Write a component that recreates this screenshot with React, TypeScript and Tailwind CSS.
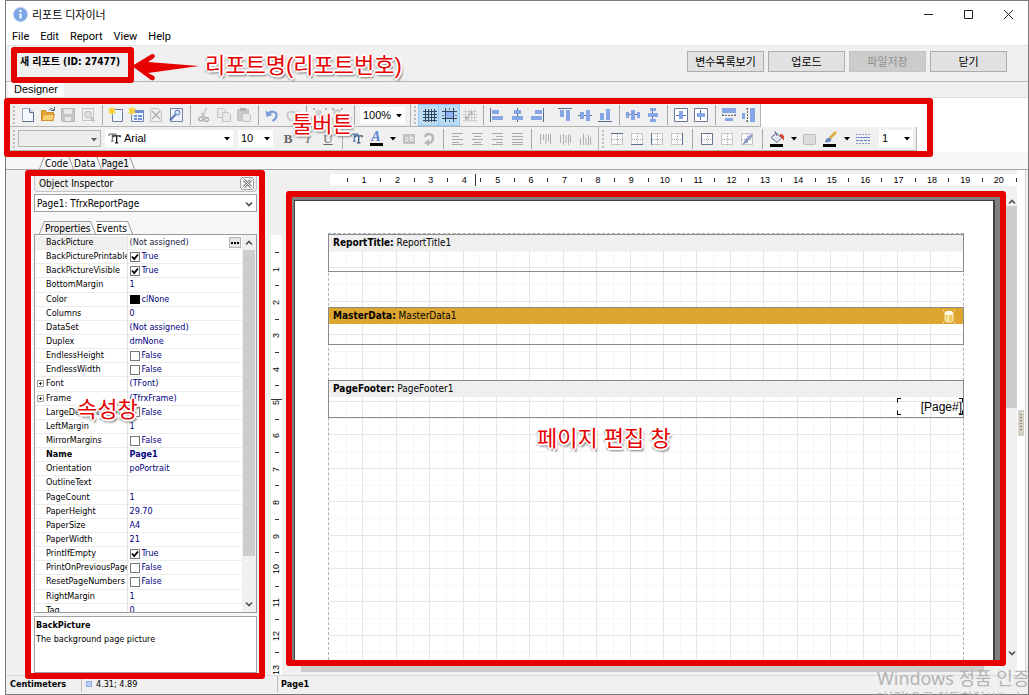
import React from "react";

type Kids = { children?: React.ReactNode };

/* ---------- annotation pieces ---------- */

function Frame() {
  return <div className="pointer-events-none absolute -inset-[6px] z-20 rounded-[3px] border-[6px] border-[#e60000]" />;
}

function Note({ children, className }: Kids & { className: string }) {
  return (
    <div
      className={`pointer-events-none absolute z-30 whitespace-nowrap font-['Liberation_Sans','Noto_Sans_CJK_KR',sans-serif] text-[22px] leading-[26px] text-[#e60000] [text-shadow:1px_0_0_#fff,-1px_0_0_#fff,0_1px_0_#fff,0_-1px_0_#fff,2px_0_0_#fff,-2px_0_0_#fff,0_2px_0_#fff,0_-2px_0_#fff,1px_1px_0_#fff,-1px_-1px_0_#fff,2px_3px_2px_#777,-2px_2px_2px_#aaa] ${className}`}
    >
      {children}
    </div>
  );
}

/* ---------- toolbar icons, all on a 16 x 16 board ---------- */

const BLUE = "#86a6e6";
const DARK = "#5a6c90";
const OFF = "#c2c2c2";

function bars(xs: number[][], fill: string) {
  return xs.map(([x, y, w, h], i) => <rect key={i} x={x} y={y} width={w} height={h} fill={fill} />);
}

function dotted(strong: React.ReactNode) {
  return (
    <>
      <rect x="2.5" y="2.5" width="11" height="11" fill="#fafafa" stroke="#9a9a9a" strokeDasharray="1 1" />
      <path d="M8.5 3v11M3 8.5h11" stroke="#a8a8a8" strokeDasharray="1 1" fill="none" />
      {strong}
    </>
  );
}

const hash = (c: string) => <path d="M4.5 2v13M7.5 2v13M10.500 2v13M13.500 2v13M2 4.500h14M2 7.500h14M2 10.500h14M2 13.500h14" stroke={c} fill="none" />;
const star = <path d="M4 -1l1 2.700L8 1 6.500 4 8 6.500 5 6 4 9 3 6 0 6.500 1.500 4 0 1l3 .700z" fill="#f5cf3c" />;

const ICONS: Record<string, React.ReactNode> = {
  newDoc: (
    <>
      <path d="M2.500 1.500h7l4 4v9h-11z" fill="#f4f8ff" stroke="#9aa5bd" />
      <path d="M9.500 1.500v4h4" fill="#c9d8f3" stroke="#5b6d95" />
      <path d="M2.500 14.500h11v-9" fill="none" stroke="#5b6d95" />
    </>
  ),
  open: (
    <>
      <path d="M1.500 13.500v-10h4l1 2h7v8z" fill="#e9a93a" stroke="#c98a25" />
      <path d="M1.500 13.500l2-6h11l-1.500 6z" fill="#f9cd72" stroke="#d3952e" />
      <path d="M9 3.500c1-2 3-2.500 4.500-1M14.500 0v3.500H11" fill="none" stroke="#4f6286" />
    </>
  ),
  save: (
    <>
      <path d="M1.500 1.500h13v13h-12l-1-1z" fill="#c6c6c6" stroke="#b4b4b4" />
      <path d="M4 2h8v5H4zM5 10h6v4H5z" fill="#e9e9e9" />
    </>
  ),
  preview: (
    <>
      <path d="M2.500 1.500h11v12h-11z" fill="#eee" stroke={OFF} />
      <circle cx="8" cy="7.500" r="3.500" fill="#ddd" stroke={OFF} />
      <path d="M10.500 10l4 4.500" stroke={OFF} strokeWidth="2" />
    </>
  ),
  newPage: (
    <>
      <path d="M4.500 2.500h10v12h-10z" fill="#edf3ff" stroke="#6e7c9c" />
      {star}
    </>
  ),
  newDialog: (
    <>
      <path d="M3.500 3.500h12v11h-12z" fill="#edf3ff" stroke="#7085b0" />
      <path d="M4 4h11v2H4zM6 8h3v2H6zM10 8h4v2h-4zM6 11h3v2H6zM10 11h4v2h-4z" fill="#6d92dc" />
      {star}
    </>
  ),
  del: (
    <>
      <path d="M2.500 1.500h8l3 3v10h-11z" fill="#eee" stroke={OFF} />
      <path d="M4 4l8 8M12 4l-8 8" stroke="#b0b0b0" strokeWidth="1.500" />
    </>
  ),
  config: (
    <>
      <path d="M2.500 1.500h12v13h-12z" fill="#eef2fb" stroke="#76839f" />
      <circle cx="9.500" cy="5.500" r="2.500" fill="#cfe0fb" stroke="#5d78b4" />
      <path d="M7.500 7.500L2 13.500" stroke="#5d78b4" strokeWidth="2" />
    </>
  ),
  cut: (
    <>
      <path d="M10.500 1L6 10M5.500 6l4.500 5" stroke={OFF} strokeWidth="1.500" fill="none" />
      <circle cx="5" cy="12" r="2" fill="none" stroke="#b0b0b0" strokeWidth="1.500" />
      <circle cx="10.500" cy="12.500" r="2" fill="none" stroke="#b0b0b0" strokeWidth="1.500" />
    </>
  ),
  copy: (
    <>
      <path d="M1.500 1.500h6l2 2v7h-8z" fill="#e9e9e9" stroke={OFF} />
      <path d="M6.500 5.500h6l2 2v7h-8z" fill="#e9e9e9" stroke={OFF} />
    </>
  ),
  paste: (
    <>
      <path d="M1.500 2.500h11v11h-11z" fill="#c9c9c9" stroke={OFF} />
      <path d="M4 1h6v3H4z" fill="#b0b0b0" />
      <path d="M6.500 6.500h6l2 2v6h-8z" fill="#e9e9e9" stroke={OFF} />
    </>
  ),
  undo: (
    <>
      <path d="M4 8c2-5 9-4 8.500 1-.3 2.500-2 4-4 5" fill="none" stroke="#7c9bd9" strokeWidth="2.200" />
      <path d="M1.500 3.500L2.500 10l6-2z" fill="#7c9bd9" />
    </>
  ),
  redo: (
    <>
      <path d="M12 8c-2-5-9-4-8.500 1 .3 2.500 2 4 4 5" fill="none" stroke="#cbcbcb" strokeWidth="2.200" />
      <path d="M14.500 3.500L13.500 10l-6-2z" fill="#cbcbcb" />
    </>
  ),
  group: (
    <>
      <path d="M4 4h5v5H4zM8 8h5v5H8z" fill="#d2d2d2" stroke={OFF} />
      {bars([[1, 1, 2, 2], [13, 1, 2, 2], [1, 13, 2, 2], [13, 13, 2, 2]], "#b5b5b5")}
    </>
  ),
  ungroup: (
    <>
      <path d="M2 3h6v5H2zM8 9h6v5H8z" fill="#d2d2d2" stroke={OFF} />
      {bars([[0, 1, 2, 2], [9, 1, 2, 2], [6, 13, 2, 2], [13, 7, 2, 2]], "#b5b5b5")}
    </>
  ),
  grid: hash("#33475f"),
  snap: (
    <>
      <path d="M5 5h7v6H5z" fill="#8db4f0" />
      <path d="M4.500 1v14M12.500 1v14M1 4.500h15M1 11.500h15" stroke="#33475f" fill="none" />
      {bars([[8, 1, 1, 2], [8, 13, 1, 2], [1, 8, 2, 1], [14, 8, 2, 1]], "#5b77a5")}
    </>
  ),
  fit: (
    <>
      {hash("#cfcfcf")}
      <path d="M5 12l6-7M5 12v-3M5 12h3M11 5v3M11 5H8" stroke="#a5a5a5" fill="none" />
    </>
  ),
  alL: <>{bars([[1, 1, 1, 14]], DARK)}{bars([[3, 3, 7, 4], [3, 9, 11, 4]], BLUE)}</>,
  alC: <>{bars([[8, 1, 1, 14]], DARK)}{bars([[5, 3, 7, 4], [3, 9, 11, 4]], BLUE)}</>,
  alR: <>{bars([[14, 1, 1, 14]], DARK)}{bars([[6, 3, 7, 4], [2, 9, 11, 4]], BLUE)}</>,
  alT: <>{bars([[1, 1, 14, 1]], DARK)}{bars([[3, 3, 4, 7], [9, 3, 4, 11]], BLUE)}</>,
  alM: <>{bars([[1, 8, 14, 1]], DARK)}{bars([[3, 5, 4, 7], [9, 3, 4, 11]], BLUE)}</>,
  alB: <>{bars([[1, 14, 14, 1]], DARK)}{bars([[3, 6, 4, 7], [9, 2, 4, 11]], BLUE)}</>,
  spH: <>{bars([[1, 7, 14, 1]], DARK)}{bars([[1, 5, 3, 6], [6, 3, 4, 10], [12, 5, 3, 6]], BLUE)}</>,
  spV: <>{bars([[7, 1, 1, 14]], DARK)}{bars([[5, 1, 6, 3], [3, 6, 10, 4], [5, 12, 6, 3]], BLUE)}</>,
  ceH: (
    <>
      <path d="M1.500 1.500h13v13h-13z" fill="#fff" stroke="#6a7893" />
      {bars([[3, 8, 10, 1]], DARK)}
      {bars([[6, 4, 4, 8]], BLUE)}
    </>
  ),
  ceV: (
    <>
      <path d="M1.500 1.500h13v13h-13z" fill="#fff" stroke="#6a7893" />
      {bars([[7, 3, 1, 10]], DARK)}
      {bars([[4, 6, 8, 4]], BLUE)}
    </>
  ),
  saW: (
    <>
      {bars([[1, 1, 14, 5], [4, 11, 8, 3]], BLUE)}
      <path d="M1 8.500h14M2 7v3M14 7v3" stroke="#666" strokeDasharray="2 1" fill="none" />
    </>
  ),
  saH: (
    <>
      {bars([[9, 1, 5, 14], [1, 6, 3, 6]], BLUE)}
      <path d="M6.500 1v14M5 2h3M5 14h3" stroke="#666" strokeDasharray="2 1" fill="none" />
    </>
  ),
  label: (
    <>
      <rect x="2" y="3" width="12" height="10" fill="#c2c2c2" />
      <path d="M4 9.500h3v-3H4.500M9.500 4.500v5h2.500v-3H9.500" stroke="#f4f4f4" fill="none" />
    </>
  ),
  rotate: (
    <>
      <path d="M4 6c1-4 8-4 8 1 0 4-3 5-6 5" fill="none" stroke="#b8b8b8" strokeWidth="2.500" />
      <path d="M8 8v7L3 12z" fill="#b8b8b8" />
    </>
  ),
  txL: <path d="M3 2.500h11M3 5.500h7M3 8.500h11M3 11.500h7M3 13.500h11" stroke="#ababab" />,
  txC: <path d="M3 2.500h11M5 5.500h7M3 8.500h11M5 11.500h7M3 13.500h11" stroke="#ababab" />,
  txR: <path d="M3 2.500h11M7 5.500h7M3 8.500h11M7 11.500h7M3 13.500h11" stroke="#ababab" />,
  txJ: <path d="M3 2.500h11M3 5.500h11M3 8.500h11M3 11.500h11M3 13.500h11" stroke="#ababab" />,
  vT: <path d="M3.500 3v10M6.500 3v6M9 3v10M11.500 3v7M13.500 3v10" stroke="#b0b0b0" />,
  vM: <path d="M3.500 4v8M6.500 3v11M9 4v8M11.500 3v11M13.500 4v8" stroke="#b0b0b0" />,
  vB: <path d="M3.500 7v7M6.500 3v11M9 7v7M11.500 4v10M13.500 6v8" stroke="#b0b0b0" />,
  frT: dotted(<path d="M2 2.500h12" stroke={DARK} />),
  frB: dotted(<path d="M2 13.500h12" stroke={DARK} />),
  frL: dotted(<path d="M2.500 2v12" stroke={DARK} />),
  frR: dotted(<path d="M13.500 2v12" stroke={DARK} />),
  frA: dotted(<path d="M2.500 2.500h11v11h-11z" stroke="#6a7893" fill="none" />),
  frN: dotted(null),
  frE: dotted(
    <>
      <path d="M13 4L7 10" stroke="#8ea3cb" strokeWidth="3" />
      <path d="M7 8l2 3-6 3z" fill="#7f93bd" />
    </>,
  ),
  bucket: (
    <>
      <path d="M2 6.500L7.500 2l5 5L8 11.500z" fill="#dfe6f1" stroke="#5c6b86" />
      <path d="M6 0l2 5" stroke="#5c6b86" />
      <path d="M11 3c4 0 5 3 3.500 7-1-3-2-4-3.500-4z" fill="#d6402f" />
      <rect x="1" y="13" width="13" height="3" fill="#000" />
    </>
  ),
  fillOff: <rect x="1.500" y="3.500" width="12" height="10" rx="1" fill="#dcdcdc" stroke="#bbb" />,
  brush: (
    <>
      <path d="M14 1L8 7" stroke="#e0a83a" strokeWidth="2.500" />
      <path d="M3 11c0-3 3-5 5-4l1.500 1.500C9 11 6 12 3 11z" fill="#7088b8" />
      <rect x="1" y="13" width="13" height="3" fill="#000" />
    </>
  ),
  lines: (
    <>
      <path d="M1 3.500h14M1 12.500h14" stroke="#8a9abb" strokeDasharray="2 1" />
      <path d="M1 9.500h14" stroke="#6079ad" strokeDasharray="3 1" />
      <path d="M1 6.500h14" stroke="#6d8cd0" />
    </>
  ),
};

const TITLES: Record<string, string> = { newDoc: "New", open: "Open", save: "Save", undo: "Undo", redo: "Redo", cut: "Cut", copy: "Copy", paste: "Paste" };

function Tool({ name, on }: { name: string; on?: boolean }) {
  return (
    <button
      type="button"
      aria-label={TITLES[name] ?? name}
      className={`flex h-5 w-5 shrink-0 items-center justify-center ${on ? "bg-[#bcdcf4] outline outline-[#90c8f6]" : ""}`}
    >
      <svg width="16" height="16" viewBox="0 0 16 16">{ICONS[name]}</svg>
    </button>
  );
}

function Tools({ names }: { names: string[] }) {
  return <>{names.map((n) => <Tool key={n} name={n} />)}</>;
}

function Sep({ wide }: { wide?: boolean }) {
  return (
    <div className={`flex h-5 shrink-0 justify-center ${wide ? "w-[10px]" : "w-2"}`}>
      <div className="h-5 w-px bg-[#a9a9a9]" />
    </div>
  );
}

function Grip() {
  return <div className="mx-[3px] h-[18px] w-[2px] shrink-0 bg-[repeating-linear-gradient(to_bottom,#bcbcbc_0_2px,transparent_2px_4px)]" />;
}

function Caret() {
  return (
    <svg width="6" height="4" viewBox="0 0 6 4" className="shrink-0">
      <path d="M0 0h6L3 3.500z" fill="#000" />
    </svg>
  );
}

function DropArrow({ label }: { label: string }) {
  return (
    <button type="button" aria-label={label} className="flex h-5 w-[13px] shrink-0 items-center justify-center">
      <Caret />
    </button>
  );
}

function Combo({ label, value, box, caret, icon }: { label: string; value: string; box: string; caret?: string; icon?: React.ReactNode }) {
  return (
    <label className={`relative flex h-[17px] shrink-0 items-center ${box}`}>
      {icon}
      <select aria-label={label} className="min-w-0 flex-1 appearance-none bg-transparent pl-[3px] font-['Liberation_Sans',sans-serif] text-[11px] leading-[15px] outline-none" defaultValue={value}>
        <option value={value}>{value}</option>
      </select>
      <span className={`pointer-events-none absolute right-[3px] top-[7px] ${caret ?? ""}`}>
        <Caret />
      </span>
    </label>
  );
}

function Letter({ label, children, className }: Kids & { label: string; className: string }) {
  return (
    <button type="button" aria-label={label} className={`h-5 w-5 shrink-0 text-center font-['Liberation_Serif',serif] text-[13px] leading-5 text-[#666] ${className}`}>
      {children}
    </button>
  );
}

function DoubleT({ blue }: { blue?: boolean }) {
  return (
    <svg width="13" height="13" viewBox="0 0 15 14" aria-hidden="true" className="shrink-0">
      <path d="M1 2h8v2M1 4V2M5 2v8M3.500 10h3" fill="none" stroke={blue ? "#4a78a8" : "#777"} strokeWidth="1.400" />
      <path d="M6 5.500V4h8v1.500M10 4v8M8 12h4" fill="none" stroke={blue ? "#3a5a80" : "#222"} strokeWidth="1.600" />
    </svg>
  );
}

function Toolbars() {
  return (
    <div className="relative ml-1 flex w-fit flex-col pr-[10px]">
      <Frame />
      <Note className="left-[282px] top-[8px]">툴버튼</Note>
      <div className="flex">
        <div className="flex h-[23px] w-[401px] items-center border-b border-r border-[#b5b5b5] bg-[#f0f0f0]">
          <Grip />
          <Tools names={["newDoc", "open", "save", "preview"]} />
          <Sep />
          <Tools names={["newPage", "newDialog", "del", "config"]} />
          <Sep />
          <Tools names={["cut", "copy", "paste"]} />
          <Sep />
          <Tools names={["undo", "redo"]} />
          <Sep />
          <Tools names={["group", "ungroup"]} />
          <Sep />
          <Combo label="Zoom" value="100%" box="ml-[2px] w-[45px] bg-white" />
        </div>
        <div className="flex h-[23px] items-center border-b border-r border-[#b5b5b5] bg-[#f0f0f0] pr-px">
          <Grip />
          <Tool name="grid" on />
          <Tool name="snap" on />
          <Tool name="fit" />
          <Sep />
          <Tools names={["alL", "alC", "alR"]} />
          <div className="w-[8px]" />
          <Tools names={["alT", "alM", "alB"]} />
          <Sep />
          <Tools names={["spH", "spV"]} />
          <Sep />
          <Tools names={["ceH", "ceV"]} />
          <Sep />
          <Tools names={["saW", "saH"]} />
        </div>
      </div>
      <div className="flex">
        <div className="flex h-[24px] w-[589px] items-center border-b border-r border-[#b5b5b5] bg-[#f0f0f0]">
          <Grip />
          <Combo label="Style" value="" box="w-[83px] border border-[#b5b5b5] bg-[#ededed]" caret="opacity-60" />
          <Combo label="Font" value="Arial" box="ml-[4px] w-[128px] bg-white pl-[3px]" icon={<DoubleT />} />
          <Combo label="Font size" value="10" box="ml-[5px] w-[35px] bg-white" />
          <div className="w-[5px]" />
          <Letter label="Bold" className="font-bold">B</Letter>
          <Letter label="Italic" className="italic">I</Letter>
          <Letter label="Underline" className="underline">U</Letter>
          <Sep />
          <button type="button" aria-label="Font settings" className="flex h-5 w-5 items-center justify-center">
            <DoubleT blue />
          </button>
          <button type="button" aria-label="Font color" className="flex h-5 w-5 flex-col items-center justify-center">
            <span className="font-['Liberation_Serif',serif] text-[14px] font-bold italic leading-[12px] text-[#5b86d6]">A</span>
            <span className="h-[3px] w-[13px] bg-black" />
          </button>
          <DropArrow label="Font color list" />
          <Tools names={["label", "rotate"]} />
          <Sep />
          <Tools names={["txL", "txC", "txR", "txJ"]} />
          <Sep />
          <Tools names={["vT", "vM", "vB"]} />
        </div>
        <div className="flex h-[24px] items-center border-b border-r border-[#b5b5b5] bg-[#f0f0f0] pr-[3px]">
          <Grip />
          <Tools names={["frT", "frB", "frL", "frR"]} />
          <Sep wide />
          <Tools names={["frA", "frN", "frE"]} />
          <Sep wide />
          <Tool name="bucket" />
          <DropArrow label="Fill color list" />
          <Tools names={["fillOff", "brush"]} />
          <DropArrow label="Line color list" />
          <Tool name="lines" />
          <Combo label="Frame width" value="1" box="ml-[6px] w-[34px] bg-white" />
        </div>
      </div>
    </div>
  );
}

/* ---------- object inspector ---------- */

type Prop = { name: string; value: string; kind?: "check" | "color"; on?: boolean; plus?: boolean; bold?: boolean };

const PROPS: Prop[] = [
  { name: "BackPicture", value: "(Not assigned)" },
  { name: "BackPicturePrintable", value: "True", kind: "check", on: true },
  { name: "BackPictureVisible", value: "True", kind: "check", on: true },
  { name: "BottomMargin", value: "1" },
  { name: "Color", value: "clNone", kind: "color" },
  { name: "Columns", value: "0" },
  { name: "DataSet", value: "(Not assigned)" },
  { name: "Duplex", value: "dmNone" },
  { name: "EndlessHeight", value: "False", kind: "check" },
  { name: "EndlessWidth", value: "False", kind: "check" },
  { name: "Font", value: "(TFont)", plus: true },
  { name: "Frame", value: "(TfrxFrame)", plus: true },
  { name: "LargeDesignHeight", value: "False", kind: "check" },
  { name: "LeftMargin", value: "1" },
  { name: "MirrorMargins", value: "False", kind: "check" },
  { name: "Name", value: "Page1", bold: true },
  { name: "Orientation", value: "poPortrait" },
  { name: "OutlineText", value: "" },
  { name: "PageCount", value: "1" },
  { name: "PaperHeight", value: "29.70" },
  { name: "PaperSize", value: "A4" },
  { name: "PaperWidth", value: "21" },
  { name: "PrintIfEmpty", value: "True", kind: "check", on: true },
  { name: "PrintOnPreviousPage", value: "False", kind: "check" },
  { name: "ResetPageNumbers", value: "False", kind: "check" },
  { name: "RightMargin", value: "1" },
  { name: "Tag", value: "0" },
];

function CheckBox({ on, label }: { on?: boolean; label: string }) {
  return (
    <span className="relative flex h-[10px] w-[10px] shrink-0">
      <input type="checkbox" defaultChecked={on} aria-label={label} className="peer h-[10px] w-[10px] appearance-none border border-[#777] bg-white" />
      <svg viewBox="0 0 10 10" className="pointer-events-none absolute inset-0 hidden h-[10px] w-[10px] peer-checked:block">
        <path d="M2 4.500l2.200 2.500L8 2.500" fill="none" stroke="#000" strokeWidth="1.800" />
      </svg>
    </span>
  );
}

function Chevron({ up, className }: { up?: boolean; className?: string }) {
  return (
    <svg width="8" height="6" viewBox="0 0 8 6" className={`shrink-0 ${className ?? ""}`}>
      <path d={up ? "M1 4.500l3-3 3 3" : "M1 1.500l3 3 3-3"} fill="none" stroke="#505050" strokeWidth="1.600" />
    </svg>
  );
}

function Slant({ back }: { back?: boolean }) {
  return (
    <svg width="6" height="13" viewBox="0 0 6 13" className="shrink-0">
      <path d={back ? "M.5 0l5 13" : "M5.500 0l-5 13"} stroke="#999" fill="none" />
    </svg>
  );
}

function Tabs({ names, lit }: { names: string[]; lit: string }) {
  return (
    <div role="tablist" className="flex h-[13px] items-end text-[10px]">
      <Slant />
      {names.map((n) => (
        <React.Fragment key={n}>
          <button
            type="button"
            role="tab"
            aria-selected={n === lit}
            className={`h-[13px] border-t border-[#999] leading-[13px] ${n === lit ? "bg-[#f0f0f0]" : "bg-white"}`}
          >
            {n}
          </button>
          <Slant back />
        </React.Fragment>
      ))}
    </div>
  );
}

function Inspector() {
  return (
    <section className="relative mb-[2px] mt-[6px] flex w-[228px] shrink-0 flex-col bg-[#f7f7f7] pl-[3px] pr-[2px]">
      <Frame />
      <Note className="left-[46px] top-[221px]">속성창</Note>
      <header className="flex h-[16px] shrink-0 items-center justify-between rounded-b-[4px] border-b border-l border-r border-[#c3c3c3] bg-[#f0f0f0] pl-[4px] pr-[2px]">
        <h2 className="text-[10px] leading-[13px]">Object Inspector</h2>
        <button type="button" aria-label="Close inspector" className="flex h-[13px] w-[14px] items-center justify-center rounded-[3px] border border-[#a5a5a5] bg-[#f4f4f4]">
          <svg width="9" height="9" viewBox="0 0 9 9">
            <path d="M1 1l7 7M8 1L1 8" stroke="#777" strokeWidth="2.600" />
            <path d="M1 1l7 7M8 1L1 8" stroke="#fff" strokeWidth="1" />
          </svg>
        </button>
      </header>
      <label className="relative mt-[2px] block shrink-0">
        <select aria-label="Object" className="block h-[18px] w-full appearance-none border border-[#a0a0a0] bg-white pl-[2px] text-[10px] leading-[15px] outline-none" defaultValue="p">
          <option value="p">Page1: TfrxReportPage</option>
        </select>
        <Chevron className="pointer-events-none absolute right-[4px] top-[7px]" />
      </label>
      <div className="mt-[9px] shrink-0 pl-[5px]">
        <Tabs names={["Properties", "Events"]} lit="Properties" />
      </div>
      <div className="flex min-h-0 flex-1 overflow-hidden border border-[#9b9b9b] bg-white">
        <div className="min-w-0 flex-1 overflow-hidden pt-px">
          <table className="h-[382px] w-full table-fixed border-collapse">
            <colgroup>
              <col className="w-[92px]" />
              <col />
            </colgroup>
            <tbody>
              {PROPS.map((p, i) => (
                <tr key={p.name} className={`border-b border-[#ececec] ${p.bold ? "font-bold" : ""}`}>
                  <th scope="row" className={`overflow-hidden whitespace-nowrap border-r border-[#e3e3e3] p-0 text-left leading-[13px] ${p.bold ? "font-bold" : "font-normal"} ${i === 0 ? "bg-[#f0f0f0]" : ""}`}>
                    <span className="flex items-center">
                      <span className="flex w-[11px] shrink-0 justify-center">
                        {p.plus && (
                          <svg width="7" height="7" viewBox="0 0 7 7">
                            <path d="M.5.500h6v6h-6z" fill="#fff" stroke="#999" />
                            <path d="M2 3.500h3M3.500 2v3" stroke="#333" />
                          </svg>
                        )}
                      </span>
                      {p.name}
                    </span>
                  </th>
                  <td className={`p-0 leading-[13px] ${i === 0 ? "text-[#1c1c3c]" : "text-[#000080]"}`}>
                    <span className="flex items-center pl-[2px]">
                      {p.kind === "check" && <CheckBox on={p.on} label={p.name} />}
                      {p.kind === "color" && <span className="h-[9px] w-[10px] shrink-0 bg-black" />}
                      <span className={p.kind ? "pl-[2px]" : ""}>{p.value}</span>
                      {i === 0 && (
                        <button type="button" aria-label="Edit BackPicture" className="ml-auto mr-px flex h-[11px] w-[12px] items-center justify-center gap-px border border-[#b5b5b5] bg-[#e4e4e4]">
                          <i className="h-[2px] w-[2px] bg-black" />
                          <i className="h-[2px] w-[2px] bg-black" />
                          <i className="h-[2px] w-[2px] bg-black" />
                        </button>
                      )}
                    </span>
                  </td>
                </tr>
              ))}
            </tbody>
          </table>
        </div>
        <div className="flex w-[14px] shrink-0 flex-col items-center bg-[#f0f0f0]">
          <div className="flex h-[15px] items-center"><Chevron up /></div>
          <div className="w-[12px] flex-[306] bg-[#cdcdcd]" />
          <div className="flex-[39]" />
          <div className="flex h-[17px] items-center"><Chevron /></div>
        </div>
      </div>
      <div className="mt-[3px] h-[57px] shrink-0 border border-[#a0a0a0] bg-white pl-px pt-px leading-[14px]">
        <p className="font-bold">BackPicture</p>
        <p>The background page picture</p>
      </div>
    </section>
  );
}

/* ---------- rulers and page ---------- */

function HRuler() {
  return (
    <div className="relative ml-[48px] mt-1 flex h-3 shrink-0 items-center bg-white pl-[9px] font-['Liberation_Sans',sans-serif] text-[9px] leading-3">
      {Array.from({ length: 40 }, (_, i) => (
        <div key={i} className="flex w-0 flex-1 justify-center overflow-visible">
          {i % 2 ? <span>{(i + 1) / 2}</span> : <span className="h-[4px] w-px bg-[#333]" />}
        </div>
      ))}
      <div className="flex w-[10px] justify-end"><span className="h-[4px] w-px bg-[#333]" /></div>
      <div className="absolute left-[145px] top-0 h-3 w-px bg-[#333]" />
    </div>
  );
}

function VRuler() {
  return (
    <div className="ml-[12px] flex w-[11px] shrink-0 flex-col overflow-hidden pt-[65px]">
      <div className="relative min-h-0 flex-1 bg-white pt-[9px] font-['Liberation_Sans',sans-serif] text-[9px] leading-[11px]">
        <div className="absolute left-0 top-[164px] h-px w-[11px] bg-[#333]" />
        <div className="flex h-[434px] flex-col">
          {Array.from({ length: 26 }, (_, i) => (
            <div key={i} className="flex h-0 flex-1 items-center justify-center">
              {i % 2 ? <span className="rotate-180 [writing-mode:vertical-rl]">{(i + 1) / 2}</span> : <span className="h-px w-[4px] bg-[#333]" />}
            </div>
          ))}
        </div>
      </div>
    </div>
  );
}

function GridLines() {
  const step = 16.7;
  const at = (i: number) => Math.round(i * step) + 0.5;
  const idx = Array.from({ length: 120 }, (_, i) => i + 1);
  const ordered = [...idx.filter((i) => i % 2), ...idx.filter((i) => i % 2 === 0)];
  return (
    <svg className="absolute inset-0 h-full w-full" aria-hidden="true">
      {ordered.map((i) => (
        <g key={i} stroke={i % 2 ? "#f6f6f6" : "#e6e6e6"}>
          <line x1={at(i)} x2={at(i)} y1="0" y2="100%" />
          <line y1={at(i)} y2={at(i)} x1="0" x2="100%" />
        </g>
      ))}
    </svg>
  );
}

function Band({ kind, name, gold, children }: Kids & { kind: string; name: string; gold?: boolean }) {
  return (
    <div className="relative h-[38px] border border-[#8a8a8a]">
      <div className={`flex h-[16px] items-center justify-between pl-[4px] pr-[8px] text-[10px] leading-[14px] ${gold ? "bg-[#dea62f]" : "bg-[#efefef]"}`}>
        <span><b>{kind}:</b> {name}</span>
        {gold && (
          <svg width="12" height="13" viewBox="0 0 12 13">
            <path d="M2 3v7.500c0 2 8 2 8 0V3z" fill="#f0c95e" stroke="#fff6d8" />
            <ellipse cx="6" cy="3" rx="4" ry="1.700" fill="#fffbe8" stroke="#fff" />
            <path d="M5 5.500v6" stroke="#fff3c4" strokeWidth="1.500" />
            <path d="M0 .500h1M11 .500h1M0 12.500h1M11 12.500h1" stroke="#fff" />
          </svg>
        )}
      </div>
      {children}
    </div>
  );
}

function PageCanvas() {
  return (
    <div className="relative ml-[10px] flex min-w-0 flex-1 bg-[#808080] pl-[2px] pr-[5px] pt-[3px]">
      <Frame />
      <Note className="left-[245px] top-[229px]">페이지 편집 창</Note>
      <div className="flex flex-1 flex-col border-l border-r-2 border-t border-[#404040] bg-white pl-[33px] pr-[29px] pt-[32px]">
        <div className="relative flex-1 border-l border-r border-t border-dashed border-[#b0b0b0]">
          <GridLines />
          <div className="relative -mx-px flex flex-col gap-[35px]">
            <Band kind="ReportTitle" name="ReportTitle1" />
            <Band kind="MasterData" name="MasterData1" gold />
            <Band kind="PageFooter" name="PageFooter1">
              <div className="absolute right-0 top-[17px] flex h-[17px] w-[66px] items-center justify-end pr-px font-['Liberation_Sans',sans-serif] text-[12px] leading-4">
                <svg className="absolute inset-0 h-[17px] w-[66px]" viewBox="0 0 66 17" aria-hidden="true">
                  <path d="M4 .500H.5v4M62 .500h3.500v4M4 16.500H.5v-4M62 16.500h3.500v-4" fill="none" stroke="#000" />
                </svg>
                [Page#]
              </div>
            </Band>
          </div>
        </div>
      </div>
    </div>
  );
}

function Editor() {
  return (
    <div className="flex min-w-0 flex-1 flex-col">
      <HRuler />
      <div className="mt-[11px] flex min-h-0 flex-1">
        <PageCanvas />
        <div className="ml-[6px] flex w-[11px] shrink-0 flex-col items-center">
          <div className="flex h-[9px] items-center"><Chevron up /></div>
          <div className="w-full flex-[203] bg-[#cdcdcd]" />
          <div className="flex-[240]" />
          <div className="flex h-[14px] items-center"><Chevron /></div>
        </div>
      </div>
      <div className="mb-[3px] flex h-[12px] shrink-0 pl-[19px] pr-[33px]">
        <div className="flex-1 bg-[#cdcdcd]" />
      </div>
    </div>
  );
}

/* ---------- window ---------- */

function HeaderButton({ children, disabled }: Kids & { disabled?: boolean }) {
  return (
    <button type="button" disabled={disabled} className="h-[21px] w-[77px] border border-[#adadad] bg-[#e1e1e1] font-['Noto_Sans_CJK_KR',sans-serif] text-[11px] leading-[17px] text-black disabled:border-[#c4c4c4] disabled:bg-[#cccccc] disabled:text-[#8f8f8f]">
      {children}
    </button>
  );
}

export default function App() {
  return (
    <div className="h-screen overflow-hidden bg-white pl-[5px] font-['DejaVu_Sans_Condensed','Noto_Sans_CJK_KR',sans-serif] text-[9px] text-black">
      <div className="flex h-full flex-col border border-[#7a7a7a] bg-[#f0f0f0]">
        <div className="flex h-[27px] shrink-0 items-center justify-between bg-white pl-[7px] pr-[14px]">
          <div className="flex items-center gap-[4px]">
            <svg width="15" height="15" viewBox="0 0 15 15">
              <circle cx="7.500" cy="7.500" r="7" fill="#7aa5e6" stroke="#b9cdee" />
              <path d="M7.500 6.500v5" stroke="#fff" strokeWidth="2" />
              <circle cx="7.500" cy="4" r="1.200" fill="#fff" />
            </svg>
            <h1 className="font-['Noto_Sans','Noto_Sans_CJK_KR',sans-serif] text-[11px] leading-4">리포트 디자이너</h1>
          </div>
          <div className="flex items-center gap-[29px]">
            <button type="button" aria-label="Minimize"><svg width="11" height="11" viewBox="0 0 11 11"><path d="M1 5.500h9" stroke="#222" /></svg></button>
            <button type="button" aria-label="Maximize"><svg width="11" height="11" viewBox="0 0 11 11"><path d="M1.500 1.500h8v8h-8z" fill="none" stroke="#222" /></svg></button>
            <button type="button" aria-label="Close"><svg width="11" height="11" viewBox="0 0 11 11"><path d="M1 1l9 9M10 1l-9 9" stroke="#222" /></svg></button>
          </div>
        </div>
        <nav className="flex h-[18px] shrink-0 items-start gap-[11px] border-b border-[#e4e4e4] bg-white pl-[6px] font-['Roboto',sans-serif] text-[11px] leading-[17px]">
          {["File", "Edit", "Report", "View", "Help"].map((m) => (
            <button type="button" key={m}>{m}</button>
          ))}
        </nav>

        <div className="flex h-[36px] shrink-0 items-start justify-between border-b border-[#b9b9b9] pl-[11px] pr-[21px] pt-[5px]">
          <div className="relative mt-px h-[25px] w-[111px] border-t border-[#8a8a8a] pl-[3px] text-[10px] font-bold leading-[17px]">
            새 리포트 (ID: 27477)
            <Frame />
            <svg className="pointer-events-none absolute left-[114px] top-0 z-20 h-[28px] w-[70px]" viewBox="0 0 70 28">
              <path d="M1 13L20 1.500c3-1.500 5 1 3 3.500L17 9l51 4-51 7 6 3c2 2.500 0 5.500-3 4z" fill="#e60000" />
            </svg>
            <Note className="left-[188px] top-0 font-normal">리포트명(리포트번호)</Note>
          </div>
          <div className="flex gap-1">
            <HeaderButton>변수목록보기</HeaderButton>
            <HeaderButton>업로드</HeaderButton>
            <HeaderButton disabled>파일저장</HeaderButton>
            <HeaderButton>닫기</HeaderButton>
          </div>
        </div>

        <div className="flex h-[16px] shrink-0 border-b border-[#dcdcdc] pl-[2px]">
          <button type="button" className="h-[15px] w-[56px] bg-white font-['Liberation_Sans',sans-serif] text-[11px] leading-[15px]">Designer</button>
        </div>

        <div className="h-[54px] shrink-0 bg-white pt-[6px]">
          <Toolbars />
        </div>

        <div className="flex h-[18px] shrink-0 items-end border-b border-[#a8a8a8] bg-[#f7f7f7] pl-[33px]">
          <Tabs names={["Code", "Data", "Page1"]} lit="Page1" />
        </div>

        <main className="flex min-h-0 flex-1">
          <div className="w-[25px] shrink-0" />
          <Inspector />
          <VRuler />
          <Editor />
          <div className="flex w-[11px] shrink-0">
            <div className="w-[8px] bg-white pt-[240px]">
              <div className="ml-px flex h-[26px] w-[6px] items-center justify-center bg-[#d2d1c4]">
                <div className="h-[18px] w-[2px] bg-[repeating-linear-gradient(to_bottom,#8d8d84_0_1px,transparent_1px_3px)]" />
              </div>
            </div>
            <div className="w-px bg-[#d5d5d5]" />
          </div>
        </main>

        <footer className="relative flex h-[19px] shrink-0 items-start overflow-hidden border-t border-[#dcdcdc] leading-[16px]">
          <div className="flex h-4 w-[76px] items-center border-r border-[#bdbdbd] pl-[4px] font-bold">Centimeters</div>
          <div className="flex h-4 w-[196px] items-center gap-[4px] border-r border-[#bdbdbd] pl-[4px]">
            <span className="h-[6px] w-[6px] border border-[#8fb0e6] bg-[#bcd3f7]" />
            4.31; 4.89
          </div>
          <div className="flex h-4 items-center pl-[3px] font-bold">Page1</div>
        </footer>
      </div>
      <div className="pointer-events-none absolute bottom-0 right-0 z-10 h-[28px] w-[152px] overflow-hidden whitespace-nowrap font-['Noto_Sans','Noto_Sans_CJK_KR',sans-serif] text-[#b4b4b4]">
        <p className="text-[18px] leading-[22px]">Windows 정품 인증</p>
        <p className="text-[13px] leading-[16px]">[설정]으로 이동하여 Windows</p>
      </div>
    </div>
  );
}
